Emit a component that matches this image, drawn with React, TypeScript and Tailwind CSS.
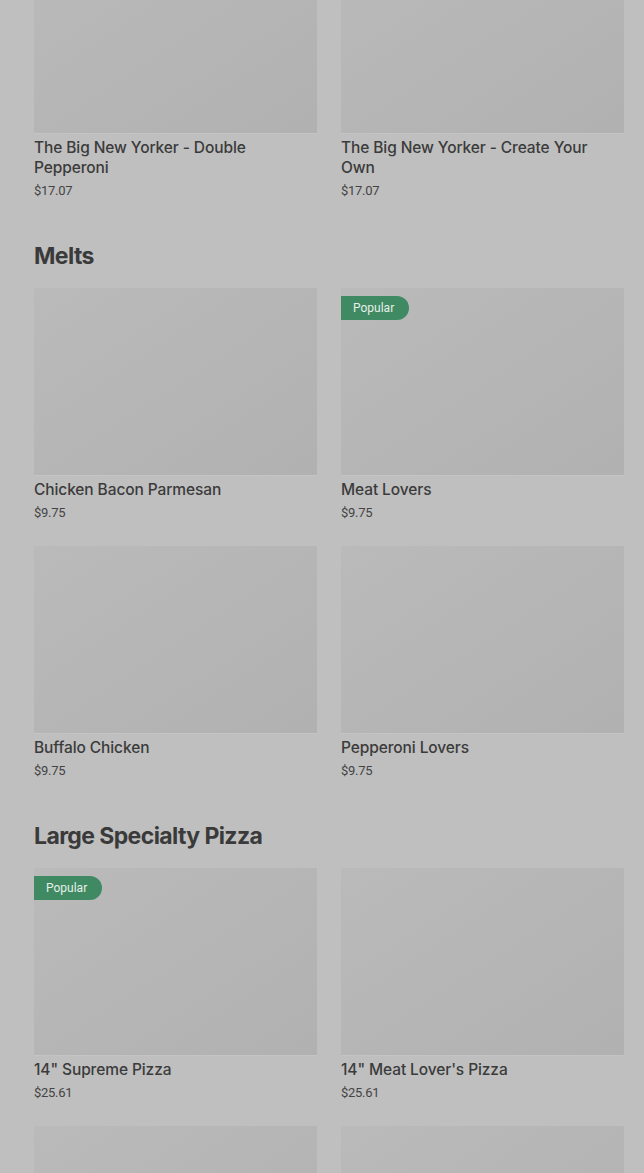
const sections = [
  {
    title: "",
    items: [
      { name: "The Big New Yorker - Double Pepperoni", price: "$17.07" },
      { name: "The Big New Yorker - Create Your Own", price: "$17.07" },
    ],
  },
  {
    title: "Melts",
    items: [
      { name: "Chicken Bacon Parmesan", price: "$9.75" },
      { name: "Meat Lovers", price: "$9.75", popular: true },
      { name: "Buffalo Chicken", price: "$9.75" },
      { name: "Pepperoni Lovers", price: "$9.75" },
    ],
  },
  {
    title: "Large Specialty Pizza",
    items: [
      { name: '14" Supreme Pizza', price: "$25.61", popular: true },
      { name: '14" Meat Lover\'s Pizza', price: "$25.61" },
      { name: "", price: "" },
      { name: "", price: "" },
    ],
  },
];

function Card({ name, price, popular }: { name: string; price: string; popular?: boolean }) {
  return (
    <div className="flex flex-col">
      <div className="relative h-[188px] bg-gradient-to-br from-[#bababa] to-[#b1b1b1] border-b border-[#c4c4c4]">
        {popular && (
          <span className="absolute left-0 top-[8px] h-[24px] pl-[12px] pr-[15px] flex items-center rounded-r-full bg-[#3f8a63] text-[#e6efe9] text-[12px] font-[Roboto,sans-serif]">
            Popular
          </span>
        )}
      </div>
      {name && (
        <div className="mt-[4px] font-[Inter,sans-serif] text-[15.5px] leading-[20px] font-medium text-[#3b3b3b] pr-4 tracking-[-0.1px]">
          {name}
        </div>
      )}
      {price && <div className="mt-[4px] text-[13px] leading-[18px] text-[#444] tracking-[-0.3px]">{price}</div>}
    </div>
  );
}

export default function App() {
  return (
    <div
      className="min-h-screen bg-[#bfbfbf] pl-[34px] pr-[20px] overflow-hidden h-[1173px]"
      style={{ fontFamily: "Roboto, 'Liberation Sans', sans-serif" }}
    >
      <div className="mt-[-54px]">
        {sections.map((s, i) => (
          <div key={i} className={i === 0 ? "" : "mt-[42px]"}>
            {s.title && (
              <h2 className="font-[Inter,sans-serif] font-bold text-[23px] leading-[28px] tracking-[-0.6px] text-[#3a3a3a] mb-[18px]">
                {s.title}
              </h2>
            )}
            <div className="grid grid-cols-2 gap-x-[24px] gap-y-[24px]">
              {s.items.map((it, j) => (
                <Card key={j} {...it} />
              ))}
            </div>
          </div>
        ))}
      </div>
    </div>
  );
}
